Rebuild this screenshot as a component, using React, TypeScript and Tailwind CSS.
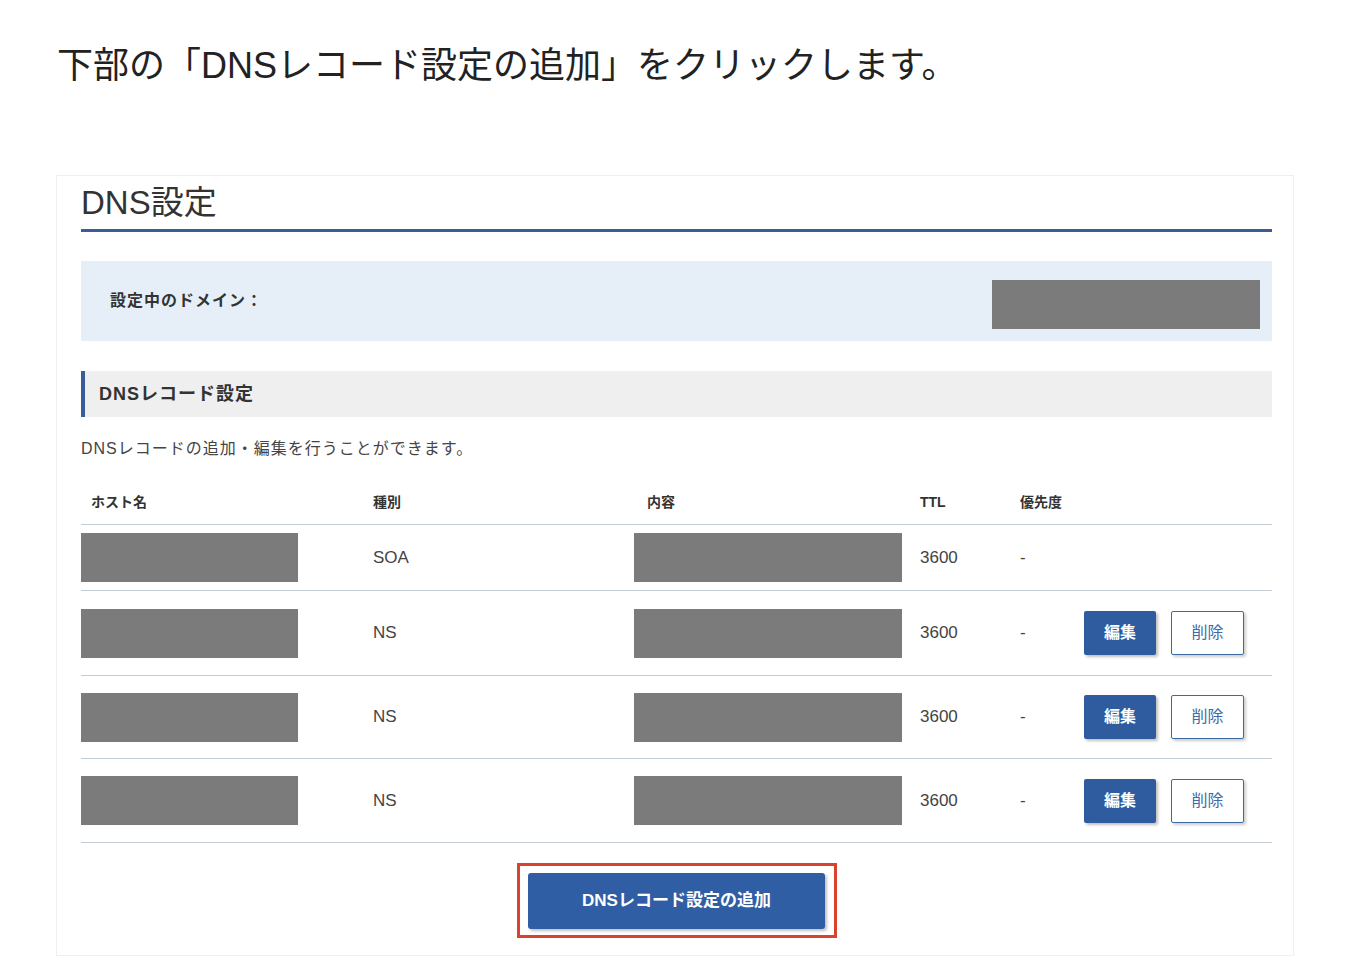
import React from "react";

const font = { fontFamily: '"Liberation Sans", "Noto Sans CJK JP", sans-serif' };

function Redacted({ w }: { w: string }) {
  return <div className={`${w} h-[49px] bg-[#7b7b7b]`} />;
}

function Row({ type, h, buttons }: { type: string; h: string; buttons: boolean }) {
  return (
    <div className={`grid grid-cols-[292px_261px_286px_100px_64px_1fr] items-center border-t border-[#c3ccd5] ${h}`}>
      <div><Redacted w="w-[217px]" /></div>
      <div className="text-[17px] text-[#444]">{type}</div>
      <div><Redacted w="w-[268px]" /></div>
      <div className="text-[17px] text-[#444]">3600</div>
      <div className="text-[17px] text-[#444]">-</div>
      <div className="flex gap-[15px]">
        {buttons && (
          <>
            <button className="w-[72px] h-[44px] rounded-[2px] bg-[#2e5c9e] text-white font-bold text-[16px] shadow-[2px_2px_3px_rgba(0,0,0,0.25)]">
              編集
            </button>
            <button className="w-[73px] h-[44px] rounded-[2px] bg-white border border-[#3c6aa5] text-[#3e6aa8] text-[16px] shadow-[2px_2px_3px_rgba(0,0,0,0.2)]">
              削除
            </button>
          </>
        )}
      </div>
    </div>
  );
}

export default function App() {
  return (
    <div style={font} className="min-h-[978px] bg-white pl-[56px] pr-[58px] pt-[40px] pb-[22px] text-[#333]">
      <h1 className="pl-[1px] text-[36px] leading-[52px] text-[#222] font-normal">
        下部の「DNSレコード設定の追加」をクリックします。
      </h1>
      <div className="mt-[83px] border border-[#efefef] pl-[24px] pr-[21px] pt-[7px] pb-[17px]">
        <div className="border-b-[3px] border-[#3a5d98] pb-[6px]">
          <div className="text-[33px] leading-[40px] text-[#333]">DNS設定</div>
        </div>
        <div className="mt-[29px] h-[80px] bg-[#e6eef8] flex items-center justify-between pl-[29px] pr-[12px]">
          <div className="text-[16px] font-bold text-[#333] tracking-[1px]">設定中のドメイン：</div>
          <div className="mt-[6px] w-[268px] h-[49px] bg-[#7b7b7b]" />
        </div>
        <div className="mt-[30px] h-[46px] bg-[#efefef] border-l-4 border-[#3a5d98] flex items-center pl-[14px]">
          <div className="text-[18px] font-bold text-[#333] tracking-[1px]">DNSレコード設定</div>
        </div>
        <div className="mt-[20px] text-[16px] leading-[24px] text-[#444] tracking-[1px]">
          DNSレコードの追加・編集を行うことができます。
        </div>
        <div className="mt-[19px]">
          <div className="grid grid-cols-[292px_261px_286px_100px_64px_1fr] items-center h-[44px] text-[14px] font-bold text-[#333]">
            <div className="pl-[10px]">ホスト名</div>
            <div>種別</div>
            <div className="pl-[13px]">内容</div>
            <div>TTL</div>
            <div>優先度</div>
            <div />
          </div>
          <Row type="SOA" h="h-[66px]" buttons={false} />
          <Row type="NS" h="h-[85px]" buttons={true} />
          <Row type="NS" h="h-[83px]" buttons={true} />
          <Row type="NS" h="h-[84px]" buttons={true} />
          <div className="border-t border-[#c3ccd5]" />
        </div>
        <div className="mt-[20px] flex justify-center">
          <div className="w-[320px] h-[75px] border-[3px] border-[#d9432e] flex items-center justify-center">
            <button className="w-[297px] h-[56px] rounded-[3px] bg-[#2f5ea5] text-white font-bold text-[17px] shadow-[2px_2px_3px_rgba(0,0,0,0.25)]">
              DNSレコード設定の追加
            </button>
          </div>
        </div>
      </div>
    </div>
  );
}
